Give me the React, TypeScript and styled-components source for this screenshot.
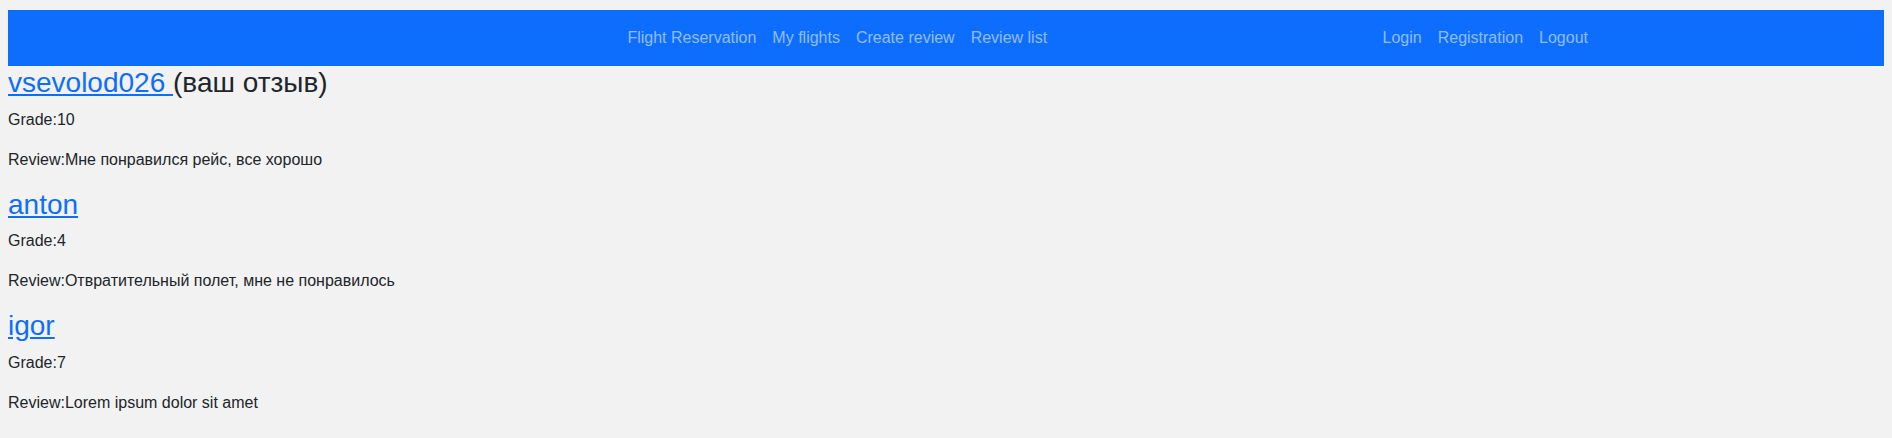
import React from "react";
import styled, { createGlobalStyle } from "styled-components";

const Global = createGlobalStyle`
  html, body { background: #f2f2f2; }
  body {
    margin: 8px;
    font-family: "Liberation Sans", Arial, sans-serif;
    font-size: 16px;
    line-height: 1.5;
    color: #212529;
  }
  * { box-sizing: border-box; }
`;

const NavBar = styled.nav`
  margin: 2px -4px 0 0;
  height: 56px;
  background: #0d6efd;
  display: flex;
  align-items: center;
`;

const NavContainer = styled.div`
  width: 100%;
  max-width: 1320px;
  margin: 0 auto;
  padding: 0 12px;
  display: flex;
  align-items: center;
`;

const NavGroup = styled.ul<{ $center?: boolean }>`
  list-style: none;
  margin: 0 ${(p) => (p.$center ? "auto" : "0")};
  padding: 0;
  display: flex;
`;

const NavLink = styled.a`
  display: block;
  padding: 8px;
  color: rgba(255, 255, 255, 0.55);
  text-decoration: none;
  font-size: 16px;
  line-height: 24px;
  cursor: pointer;
`;

const Review = styled.section``;

const Title = styled.h3`
  margin: 0 0 8px;
  font-size: 28px;
  font-weight: 500;
  line-height: 1.2;
  color: #212529;
`;

const UserLink = styled.a`
  color: #0d6efd;
  text-decoration: underline;
`;

const Line = styled.p`
  margin: 0 0 16px;
`;

const reviews = [
  { user: "vsevolod026", own: true, grade: 10, text: "Мне понравился рейс, все хорошо" },
  { user: "anton", own: false, grade: 4, text: "Отвратительный полет, мне не понравилось" },
  { user: "igor", own: false, grade: 7, text: "Lorem ipsum dolor sit amet" },
];

export default function App() {
  return (
    <>
      <Global />
      <NavBar>
        <NavContainer>
          <NavGroup $center>
            <li><NavLink>Flight Reservation</NavLink></li>
            <li><NavLink>My flights</NavLink></li>
            <li><NavLink>Create review</NavLink></li>
            <li><NavLink>Review list</NavLink></li>
          </NavGroup>
          <NavGroup>
            <li><NavLink>Login</NavLink></li>
            <li><NavLink>Registration</NavLink></li>
            <li><NavLink>Logout</NavLink></li>
          </NavGroup>
        </NavContainer>
      </NavBar>
      {reviews.map((r) => (
        <Review key={r.user}>
          <Title>
            <UserLink href="#">{r.own ? `${r.user} ` : r.user}</UserLink>
            {r.own ? "(ваш отзыв)" : null}
          </Title>
          <Line>Grade:{r.grade}</Line>
          <Line>Review:{r.text}</Line>
        </Review>
      ))}
    </>
  );
}
